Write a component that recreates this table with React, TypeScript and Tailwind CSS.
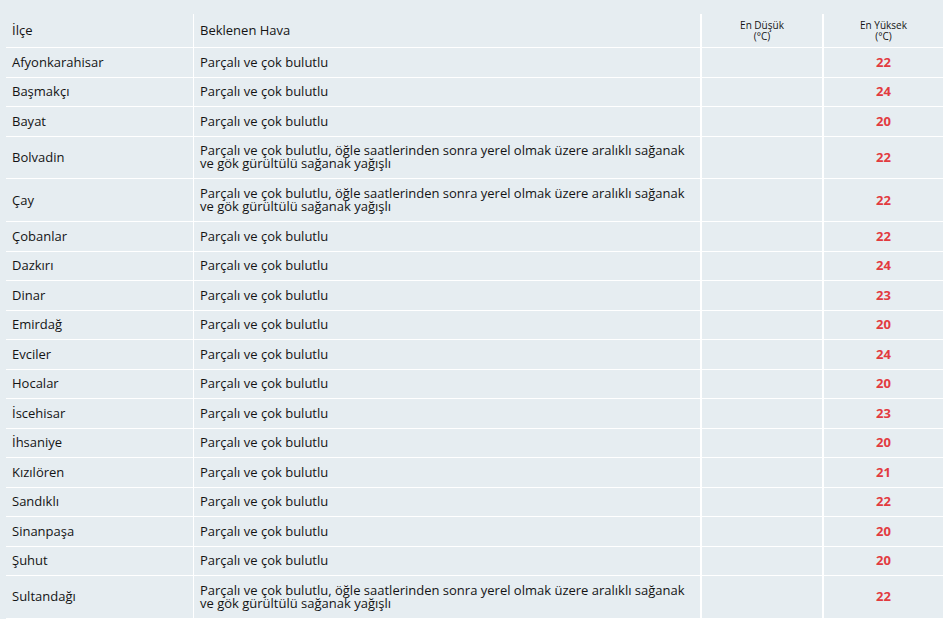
import React from "react";

type Row = { name: string; desc: string; hi: number };

const SHORT = "Parçalı ve çok bulutlu";
const LONG =
  "Parçalı ve çok bulutlu, öğle saatlerinden sonra yerel olmak üzere aralıklı sağanak ve gök gürültülü sağanak yağışlı";

const rows: Row[] = [
  { name: "Afyonkarahisar", desc: SHORT, hi: 22 },
  { name: "Başmakçı", desc: SHORT, hi: 24 },
  { name: "Bayat", desc: SHORT, hi: 20 },
  { name: "Bolvadin", desc: LONG, hi: 22 },
  { name: "Çay", desc: LONG, hi: 22 },
  { name: "Çobanlar", desc: SHORT, hi: 22 },
  { name: "Dazkırı", desc: SHORT, hi: 24 },
  { name: "Dinar", desc: SHORT, hi: 23 },
  { name: "Emirdağ", desc: SHORT, hi: 20 },
  { name: "Evciler", desc: SHORT, hi: 24 },
  { name: "Hocalar", desc: SHORT, hi: 20 },
  { name: "İscehisar", desc: SHORT, hi: 23 },
  { name: "İhsaniye", desc: SHORT, hi: 20 },
  { name: "Kızılören", desc: SHORT, hi: 21 },
  { name: "Sandıklı", desc: SHORT, hi: 22 },
  { name: "Sinanpaşa", desc: SHORT, hi: 20 },
  { name: "Şuhut", desc: SHORT, hi: 20 },
  { name: "Sultandağı", desc: LONG, hi: 22 },
];

export default function App() {
  return (
    <div
      className="min-h-screen bg-[#e6edf1] pt-[14px] pl-[6px] text-[#141414] text-[13px] leading-[13.25px]"
      style={{ fontFamily: '"Open Sans", "Noto Sans", sans-serif' }}
    >
      <div className="flex h-[34px] border-b border-white">
        <div className="w-[187px] px-[6px] flex items-center">İlçe</div>
        <div className="w-[507px] border-l border-white px-[6px] flex items-center">Beklenen Hava</div>
        <div className="w-[122px] border-l-2 border-white flex flex-col items-center justify-center text-[10px] leading-[11px]">
          <span>En Düşük</span>
          <span>(°C)</span>
        </div>
        <div className="w-[121px] border-l-2 border-white flex flex-col items-center justify-center text-[10px] leading-[11px]">
          <span>En Yüksek</span>
          <span>(°C)</span>
        </div>
      </div>
      {rows.map((r) => (
        <div key={r.name} className="flex border-b border-white">
          <div className="w-[187px] px-[6px] py-[7.625px] flex items-center">{r.name}</div>
          <div className="w-[507px] border-l border-white px-[6px] py-[7.625px] flex items-center">{r.desc}</div>
          <div className="w-[122px] border-l-2 border-white" />
          <div className="w-[121px] border-l-2 border-white flex items-center justify-center font-bold text-[#e23b3f]">
            {r.hi}
          </div>
        </div>
      ))}
    </div>
  );
}
